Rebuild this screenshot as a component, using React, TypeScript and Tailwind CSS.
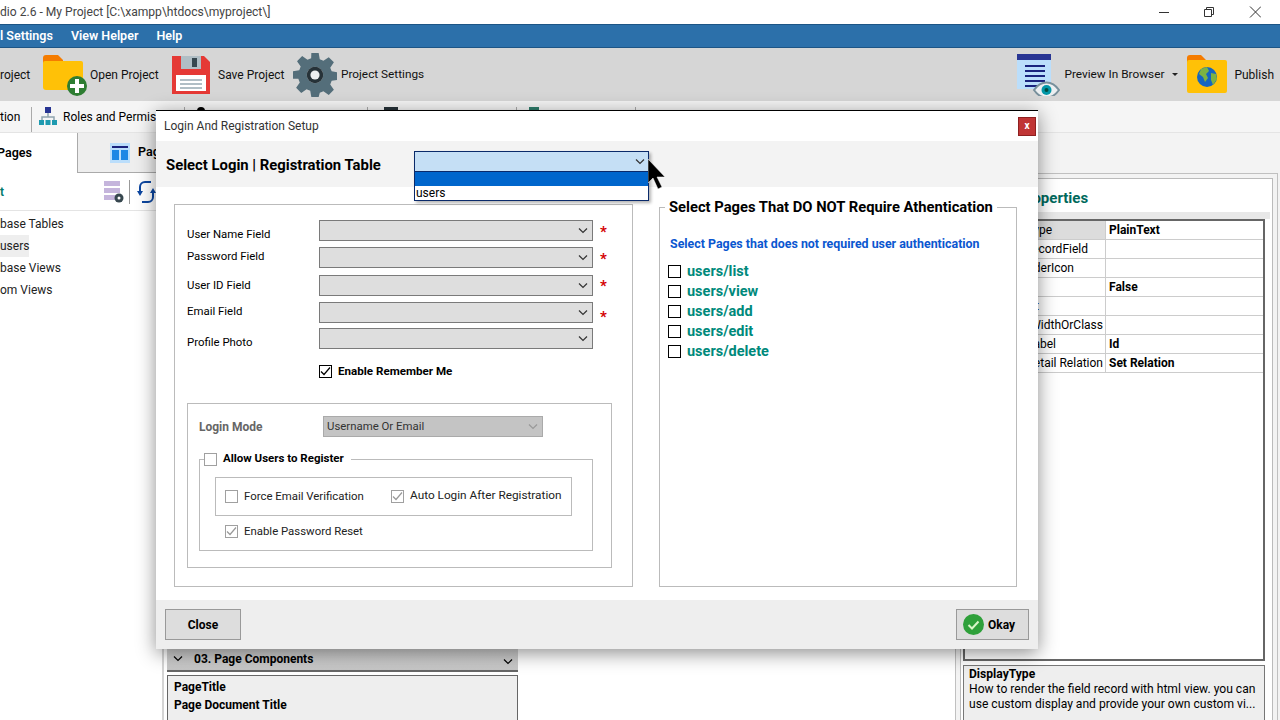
import React from 'react'

const FolderPlus = () => (
  <svg width="46" height="42" viewBox="0 0 46 42" className="shrink-0">
    <path d="M0 4a3 3 0 0 1 3-3h12l5 5v10H0z" fill="#f57c00" />
    <path d="M0 9a2 2 0 0 1 2-2h36a2 2 0 0 1 2 2v25a2 2 0 0 1-2 2H3a3 3 0 0 1-3-3z" fill="#ffc107" />
    <circle cx="34" cy="32" r="10" fill="#2e7d32" />
    <path d="M34 25v14M27 32h14" stroke="#fff" strokeWidth="4" />
  </svg>
)

const Floppy = () => (
  <svg width="38" height="38" viewBox="0 0 38 38" className="shrink-0">
    <path d="M0 0h32l6 6v32H0z" fill="#e53935" />
    <path d="M9 0h20v13H9z" fill="#b0bec5" />
    <path d="M20 2h5v9h-5z" fill="#37474f" />
    <path d="M4 19h30v16H4z" fill="#fff" />
    <path d="M8 23h22v2H8zM8 27h22v2H8zM8 31h22v2H8z" fill="#b0bec5" />
  </svg>
)

const Gear = () => (
  <svg width="44" height="44" viewBox="0 0 24 24" className="shrink-0">
    <path
      fill="#546e7a"
      fillRule="evenodd"
      d="M10 0h4l.6 3.4 2 .8L19.500 2.300l2.800 2.800-2 2.900.8 2 3.400.6v4l-3.400.6-.8 2 2 2.900-2.800 2.800-2.900-2-2 .8L14 24h-4l-.6-3.400-2-.8-2.900 2-2.800-2.800 2-2.900-.8-2L0 14v-4l3.400-.6.800-2-2-2.900L5 1.700l2.900 2 2-.8zM12 7.500a4.500 4.500 0 1 0 0 9 4.500 4.500 0 0 0 0-9z"
    />
    <circle cx="12" cy="12" r="4.500" fill="#263238" />
    <circle cx="12" cy="12" r="2.500" fill="#eceff1" />
  </svg>
)

const PreviewIcon = () => (
  <svg width="43" height="42" viewBox="0 0 43 42" className="shrink-0">
    <path d="M0 0h34v35H0z" fill="#bbdefb" />
    <path d="M0 0h34v6H0z" fill="#283593" />
    <path d="M8 11h20v2H8zM8 16h20v2H8zM8 21h20v2H8zM8 26h20v2H8zM8 31h14v2H8z" fill="#1a237e" />
    <path d="M17 36c7-10 18-10 25 0-7 10-18 10-25 0z" fill="#eceff1" stroke="#78909c" strokeWidth="2" />
    <circle cx="29.500" cy="36" r="5" fill="#0097a7" />
    <circle cx="29.500" cy="36" r="2" fill="#004d40" />
  </svg>
)

const FolderGlobe = () => (
  <svg width="40" height="39" viewBox="0 0 40 39" className="shrink-0">
    <path d="M0 3a3 3 0 0 1 3-3h11l5 5v10H0z" fill="#f57c00" />
    <path d="M0 7a2 2 0 0 1 2-2h36a2 2 0 0 1 2 2v29a2 2 0 0 1-2 2H2a2 2 0 0 1-2-2z" fill="#ffc107" />
    <circle cx="20" cy="22" r="10" fill="#1565c0" />
    <path d="M14 14l6-2 2 4-3 3 2 4-3 4-2-5-4-3zM24 18l5 1 1 5-4 6-2-5z" fill="#7cb342" />
  </svg>
)

const RolesIcon = () => (
  <svg width="18" height="20" viewBox="0 0 18 20" className="shrink-0">
    <path d="M6 0h6v6H6z" fill="#283593" />
    <path d="M9 6v4M3 13v-3h12v3" stroke="#90a4ae" strokeWidth="1.500" fill="none" />
    <path d="M0 13h5v5H0zM6.500 13h5v5h-5zM13 13h5v5h-5z" fill="#1e9ab0" />
  </svg>
)

const TableIcon = () => (
  <svg width="20" height="20" viewBox="0 0 20 20" className="shrink-0">
    <path d="M0 0h20v20H0z" fill="#bbdefb" />
    <path d="M2 3h16v2H2z" fill="#1a237e" />
    <path d="M2 7h7v10H2zM11 7h7v10h-7z" fill="#1e88e5" />
  </svg>
)

const DbSettings = () => (
  <svg width="20" height="22" viewBox="0 0 20 22" className="shrink-0">
    <path d="M0 0h16v5H0zM0 7h16v5H0zM0 14h16v5H0z" fill="#c5b5dc" />
    <circle cx="15" cy="17" r="4.500" fill="#37474f" />
    <circle cx="15" cy="17" r="1.500" fill="#fff" />
  </svg>
)

const RefreshIcon = () => (
  <svg width="19" height="24" viewBox="0 0 19 24" className="shrink-0" fill="none">
    <path d="M3 12V7a5 5 0 0 1 5-5h6M16 12v5a5 5 0 0 1-5 5H5" stroke="#0d47a1" strokeWidth="2" />
    <path d="M0 11h6l-3 5zM13 13h6l-3-5z" fill="#0d47a1" />
  </svg>
)

const Chevron = ({ className = 'stroke-[#333]' }: { className?: string }) => (
  <svg width="10" height="6" viewBox="0 0 10 6" fill="none" className={className}>
    <path d="M1 .5l4 4 4-4" strokeWidth="1.200" />
  </svg>
)

const Check = ({ className }: { className: string }) => (
  <svg width="11" height="11" viewBox="0 0 11 11" fill="none" className={className}>
    <path d="M1 5.500l3 3 6-7" strokeWidth="1.200" />
  </svg>
)

const Select = ({ className = 'w-[274px]' }: { className?: string }) => (
  <div className={`flex h-[21px] items-center justify-end border border-[#7a7a7a] bg-[#dedede] pr-[4px] ${className}`}>
    <Chevron />
  </div>
)

const Field = ({ label, labelPad, star }: { label: string; labelPad: string; star?: string }) => (
  <div className="flex h-[21px] items-start">
    <div className={`w-[132px] shrink-0 text-[11.4px] leading-4 text-black ${labelPad}`}>{label}</div>
    <Select />
    {star && <span className={`ml-[7px] text-[15px] leading-4 font-bold text-[#d40000] ${star}`}>*</span>}
  </div>
)

const GrayCheck = ({ checked, label, className = '', textSize = 'text-[11.4px]' }: { checked?: boolean; label: string; className?: string; textSize?: string }) => (
  <div className={`flex items-center ${className}`}>
    <div className="flex h-[13px] w-[13px] items-center justify-center border border-[#a0a0a0] bg-white">
      {checked && <Check className="stroke-[#999]" />}
    </div>
    <span className={`ml-[6px] text-[#222] ${textSize}`}>{label}</span>
  </div>
)

const pages = ['users/list', 'users/view', 'users/add', 'users/edit', 'users/delete']

const rows = [
  { label: 'DisplayType', pad: 'pr-[53px] bg-[#dcdcdc]', value: 'PlainText' },
  { label: 'ShowRecordField', pad: 'pr-[17px]', value: '' },
  { label: 'HeaderIcon', pad: 'pr-[31px]', value: '' },
  { label: 'Hidden', pad: 'pr-[80px]', value: 'False' },
  { label: 'Format', pad: 'pr-[66px]', value: '' },
  { label: 'ColumnWidthOrClass', pad: 'pr-[2px]', value: '' },
  { label: 'FieldLabel', pad: 'pr-[49px]', value: 'Id' },
  { label: 'Master Detail Relation', pad: 'pr-[2px]', value: 'Set Relation' },
]

export default function App() {
  return (
    <div className="relative flex h-[720px] w-[1280px] flex-col overflow-hidden bg-white font-['Roboto',sans-serif] text-[12px] text-black">
      {/* Title bar */}
      <div className="flex h-[24px] shrink-0 items-center justify-between bg-white text-[12.1px] text-[#444]">
        <span>dio 2.6 - My Project [C:\xampp\htdocs\myproject\]</span>
        <div className="flex items-center">
          <svg width="102" height="14" viewBox="0 0 102 14" fill="none" stroke="#333" className="mr-[19px]">
            <path d="M0 7.500h10" />
            <path d="M45.500 4.500h7v7h-7zM47.500 4.500v-2h7v7h-2" />
            <path d="M91 1.500l11 11M102 1.500l-11 11" />
          </svg>
        </div>
      </div>

      {/* Menu bar */}
      <div className="flex h-[24px] shrink-0 items-center gap-[18px] border-y border-[#1d5585] bg-[#2c70aa] text-[12.5px] font-semibold text-white">
        <span>l Settings</span>
        <span>View Helper</span>
        <span>Help</span>
      </div>

      {/* Main toolbar */}
      <div className="flex h-[53px] shrink-0 items-center justify-between bg-[#d6d6d6] text-[12px] text-[#111]">
        <div className="flex items-center">
          <span className="w-[43px]">roject</span>
          <FolderPlus />
          <span className="ml-[1px] w-[82px]">Open Project</span>
          <Floppy />
          <span className="ml-[8px] w-[75px]">Save Project</span>
          <Gear />
          <span className="ml-[4px] text-[11.8px]">Project Settings</span>
        </div>
        <div className="flex items-center pr-[6px]">
          <PreviewIcon />
          <span className="ml-[4px] text-[11.8px]">Preview In Browser</span>
          <span className="mr-[9px] ml-[8px] h-0 w-0 border-x-[3px] border-t-[3px] border-x-transparent border-t-[#222]" />
          <FolderGlobe />
          <span className="ml-[7px]">Publish</span>
        </div>
      </div>

      {/* Secondary toolbar, mostly under the dialog */}
      <div className="flex h-[32px] shrink-0 items-end border-b border-[#e4e4e4] bg-[#f5f5f5]">
        <div className="flex h-[25px] w-[32px] items-center border-r border-[#aaa] pb-[6px]">tion</div>
        <div className="flex h-[25px] w-[153px] items-center gap-[6px] border-r border-[#aaa] pb-[6px] pl-[7px] whitespace-nowrap">
          <RolesIcon />
          <span>Roles and Permissions</span>
        </div>
        <div className="h-[25px] w-[183px] border-r border-[#aaa] pl-[12px]">
          <div className="h-[12px] w-[8px] rounded-full bg-black" />
        </div>
        <div className="h-[25px] w-[149px] border-r border-[#aaa] pl-[16px]">
          <div className="h-[12px] w-[14px] bg-[#263238]" />
        </div>
        <div className="h-[25px] w-[119px] border-r border-[#aaa]">
          <div className="ml-[12px] h-[12px] w-[10px] bg-[#2e7d6b]" />
        </div>
      </div>

      {/* Workspace */}
      <div className="flex min-h-0 flex-1">
        <div className="flex w-[164px] shrink-0 flex-col border-r-2 border-[#d4d4d4]">
          <div className="flex h-[40px] shrink-0">
            <div className="flex w-[78px] shrink-0 items-center border-r border-[#aaa] bg-white text-[12.5px] font-semibold">
              <span className="-ml-[3px]">Pages</span>
            </div>
            <div className="flex min-w-0 flex-1 items-center gap-[8px] whitespace-nowrap border-b border-[#aaa] bg-[#eee] pl-[32px] text-[12.5px] font-semibold">
              <TableIcon />
              <span>Pages</span>
            </div>
          </div>
          <div className="flex h-[38px] shrink-0 items-center border-b border-[#e4e4e4]">
            <span className="w-[104px] font-semibold text-[#00796b]">t</span>
            <DbSettings />
            <div className="mx-[5px] h-[24px] border-l border-[#999]" />
            <div className="ml-[2px]"><RefreshIcon /></div>
          </div>
          <div className="pt-[2px] text-[12px] text-[#222]">
            <div className="flex h-[22px] items-center">base Tables</div>
            <div className="flex h-[22px] w-[29px] items-center bg-[#eee]">users</div>
            <div className="flex h-[22px] items-center">base Views</div>
            <div className="flex h-[22px] items-center">om Views</div>
          </div>
        </div>

        <div className="flex w-[354px] shrink-0 flex-col justify-end pl-[3px]">
          <div className="flex h-[26px] shrink-0 items-center justify-between border-b-2 border-[#666] bg-gradient-to-b from-[#d4d4d4] to-[#c6c6c6] pt-[2px] pr-[5px] pl-[6px]">
            <div className="flex items-center gap-[11px] font-bold">
              <Chevron className="stroke-black stroke-[1.5]" />
              <span>03. Page Components</span>
            </div>
            <Chevron className="mt-[6px] stroke-black stroke-[1.5]" />
          </div>
          <div className="mt-[3px] h-[45px] shrink-0 border border-b-0 border-[#666] bg-[#eee] pt-[2px] pl-[6px] font-bold">
            <div className="h-[18px] leading-[18px]">PageTitle</div>
            <div className="h-[18px] leading-[18px]">Page Document Title</div>
          </div>
        </div>

        {/* Properties panel */}
        <div className="ml-[437px] flex h-full w-[325px] shrink-0 flex-col bg-[#f3f3f3] pt-[40px] pr-[2px]">
          <div className="flex flex-1 flex-col border-x border-t border-[#c0c0c0] px-[4px] pt-[4px]">
            <div className="flex flex-1 flex-col border-x border-t border-[#bbb] bg-white pr-[2px] pl-[2px]">
              <div className="flex h-[33px] shrink-0 items-end pb-[3px] pl-[18px] text-[15px] font-bold text-[#00695c]">Field Properties</div>
              <div className="flex min-h-0 flex-1 flex-col border-t-[7px] border-[#e8e8e8]">
                <div className="mr-[5px] flex-1 border-2 border-[#666]">
                  {rows.map((row) => (
                    <div key={row.label} className="flex h-[19px] border-b border-[#ccc]">
                      <div className={`w-[141px] border-r border-[#ccc] text-right whitespace-nowrap ${row.pad}`}>{row.label}</div>
                      <div className="pl-[3px] font-bold">{row.value}</div>
                    </div>
                  ))}
                </div>
              </div>
              <div className="mt-[4px] mr-[5px] h-[55px] shrink-0 border border-b-0 border-[#777] bg-[#eee] pt-[1px] pl-[5px] text-[12.1px] leading-[15px]">
                <div className="font-bold">DisplayType</div>
                <div>How to render the field record with html view. you can use custom display and provide your own custom vi...</div>
              </div>
            </div>
          </div>
        </div>
      </div>

      {/* Dialog */}
      <div className="absolute top-[110px] left-[156px] flex h-[539px] w-[882px] flex-col border-t border-black bg-white shadow-[0_4px_18px_rgba(0,0,0,0.45)]">
        <div className="flex h-[30px] shrink-0 items-center justify-between pr-[2px] pl-[8px] text-[12px] text-[#333]">
          <span>Login And Registration Setup</span>
          <div className="flex h-[19px] w-[18px] items-center justify-center border border-[#8e2020] bg-[#c03535] text-[10px] leading-none font-bold text-white">x</div>
        </div>
        <div className="flex h-[46px] shrink-0 items-center bg-[#f3f3f3] pt-[2px] pl-[10px]">
          <span className="w-[248px] text-[14.85px] font-bold">Select Login | Registration Table</span>
        </div>

        <div className="flex min-h-0 flex-1 items-start pl-[18px]">
          <div className="mt-[17px] h-[383px] w-[459px] shrink-0 border border-[#bbb] pt-[15px] pl-[12px]">
            <div className="flex flex-col">
              <div className="mb-[6px]"><Field label="User Name Field" labelPad="pt-[6px]" star="pt-[4px]" /></div>
              <div className="mb-[7px]"><Field label="Password Field" labelPad="pt-[1px]" star="pt-[4px]" /></div>
              <div className="mb-[6px]"><Field label="User ID Field" labelPad="pt-[2px]" star="pt-[3px]" /></div>
              <div className="mb-[5px]"><Field label="Email Field" labelPad="pt-[1px]" star="pt-[7px]" /></div>
              <Field label="Profile Photo" labelPad="pt-[6px]" />
            </div>
            <div className="mt-[14px] ml-[132px] flex items-center">
              <div className="flex h-[13px] w-[13px] items-center justify-center border border-black bg-white">
                <Check className="stroke-black" />
              </div>
              <span className="ml-[6px] text-[11.6px] font-bold">Enable Remember Me</span>
            </div>

            <div className="mt-[23px] h-[165px] w-[425px] border border-[#bbb] pt-[12px] pl-[11px]">
              <div className="flex items-center">
                <span className="w-[124px] text-[12px] font-bold text-[#666]">Login Mode</span>
                <div className="flex h-[21px] w-[220px] items-center justify-between border border-[#aaa] bg-[#c4c4c4] pr-[4px] pl-[3px] text-[11.4px] text-[#333]">
                  <span>Username Or Email</span>
                  <Chevron className="stroke-[#999]" />
                </div>
              </div>
              <fieldset className="mt-[13px] h-[101px] w-[394px] border border-[#bbb] pb-[9px] pl-[15px]">
                <legend className="-ml-[11px] flex items-center pr-[7px]">
                  <div className="h-[13px] w-[13px] border border-[#a0a0a0] bg-white" />
                  <span className="ml-[6px] text-[11.5px] font-bold">Allow Users to Register</span>
                </legend>
                <div className="mt-[9px] flex h-[39px] w-[357px] items-center border border-[#bbb] pl-[9px]">
                  <GrayCheck label="Force Email Verification" className="w-[166px]" />
                  <GrayCheck checked label="Auto Login After Registration" textSize="text-[11.8px]" />
                </div>
                <GrayCheck checked label="Enable Password Reset" className="mt-[7px] ml-[10px]" />
              </fieldset>
            </div>
          </div>

          <fieldset className="mt-[9px] ml-[26px] h-[391px] w-[358px] shrink-0 border border-[#bbb] pl-[9px]">
            <legend className="-ml-[4px] px-[4px] text-[14.75px] font-bold">Select Pages That DO NOT Require Athentication</legend>
            <div className="mt-[17px] ml-[1px] text-[12.4px] font-bold text-[#0b57d0]">Select Pages that does not required user authentication</div>
            <div className="-ml-[1px] mt-[8px] flex flex-col">
              {pages.map((page) => (
                <div key={page} className="flex h-[20px] items-center">
                  <div className="h-[13px] w-[13px] border border-black bg-white" />
                  <span className="ml-[6px] text-[14.5px] font-bold text-[#00897b]">{page}</span>
                </div>
              ))}
            </div>
          </fieldset>
        </div>

        <div className="flex h-[49px] shrink-0 items-center justify-between bg-[#eee] pr-[9px] pl-[9px]">
          <div className="flex h-[31px] w-[76px] items-center justify-center border border-[#999] bg-[#ddd] font-bold">Close</div>
          <div className="flex h-[31px] w-[73px] items-center gap-[4px] border border-[#999] bg-[#ddd] pl-[6px] font-bold">
            <svg width="21" height="21" viewBox="0 0 21 21" className="shrink-0">
              <circle cx="10.500" cy="10.500" r="10.500" fill="#2ea03a" />
              <path d="M5.500 11l3.500 3.500 6.500-7" stroke="#d9f5c8" strokeWidth="2" fill="none" />
            </svg>
            <span>Okay</span>
          </div>
        </div>
      </div>

      {/* Open dropdown over the dialog */}
      <div className="absolute top-[151px] left-[414px] flex h-[50px] w-[235px] flex-col border border-[#0a2a6a] bg-white shadow-[2px_2px_3px_rgba(0,0,0,0.3)]">
        <div className="flex h-[20px] shrink-0 items-center justify-end border-b border-[#0a2a6a] bg-[#c5dff5] pr-[3px]">
          <Chevron />
        </div>
        <div className="h-[14px] shrink-0 bg-[#0066cc]" />
        <div className="pl-[1px] text-[12px] leading-[14px]">users</div>
      </div>

      {/* Mouse pointer */}
      <svg width="19" height="31" viewBox="0 0 19 31" className="absolute top-[159px] left-[648px]">
        <path d="M0 0v24l5-5 5 11 4-2-5-10h8z" fill="#000" stroke="#fff" strokeWidth="0.500" />
      </svg>
    </div>
  )
}
